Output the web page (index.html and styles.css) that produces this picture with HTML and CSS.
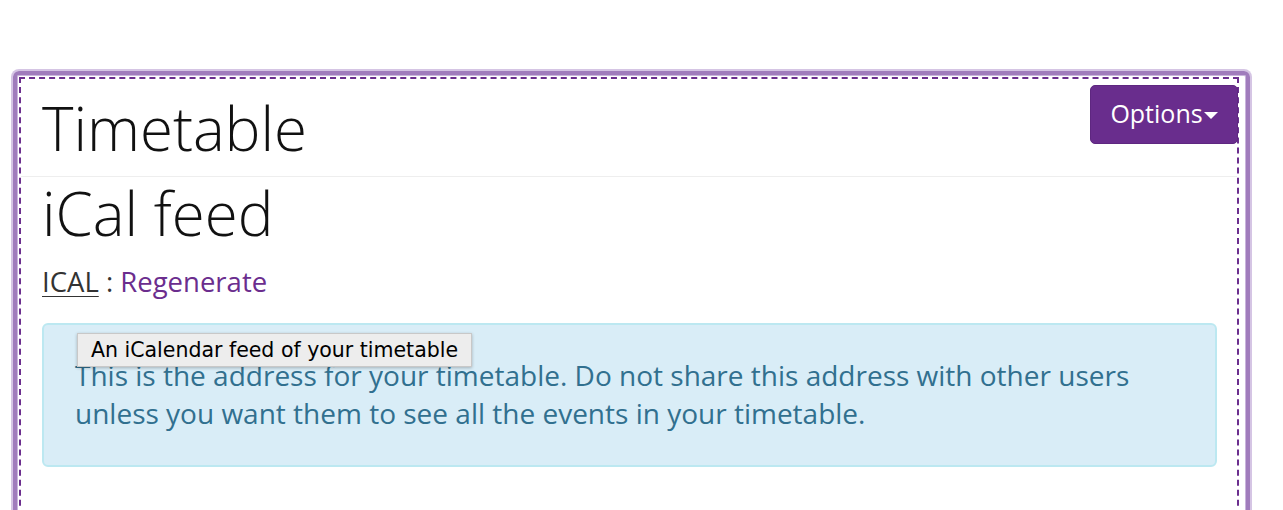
FILE: index.html
```html
<!DOCTYPE html>
<html>
<head>
<meta charset="utf-8">
<link rel="stylesheet" href="styles.css">
</head>
<body>
<div class="frame">
  <div class="inner">
    <div class="header">
      <h1 class="title">Timetable</h1>
      <button class="btn-options">Options<span class="caret"></span></button>
    </div>
    <div class="content">
      <h2 class="subtitle">iCal feed</h2>
      <p class="links"><abbr class="abbr">ICAL</abbr> : <a class="regen" href="#">Regenerate</a></p>
      <div class="alert">
        This is the address for your timetable. Do not share this address with other users unless you want them to see all the events in your timetable.
        <div class="tooltip">An iCalendar feed of your timetable</div>
      </div>
    </div>
  </div>
</div>
</body>
</html>
```
FILE: styles.css
```css
html, body {
  margin: 0;
  padding: 0;
  background: #fff;
  overflow: hidden;
  height: 510px;
}
body {
  font-family: "Open Sans", sans-serif;
  color: #333;
}
.frame {
  margin: 71px 33px 0 13px;
  border: 4px solid #a07cbc;
  border-radius: 6px;
  box-shadow: 0 0 0 2px #d5c5e4, inset 0 0 0 1px #c9b4dc;
  padding: 2px 7px 0 2px;
  height: 600px;
}
.inner {
  border: 2px dashed #6b2e8e;
  height: 100%;
  box-sizing: border-box;
}
.header {
  display: flex;
  justify-content: space-between;
  align-items: flex-start;
  border-bottom: 1px solid #eee;
  padding: 0 0 0 21px;
  height: 97px;
}
.title {
  margin: 11px 0 0 0;
  font-weight: 300;
  font-size: 60px;
  line-height: 76px;
  color: #111;
}
.btn-options {
  margin-top: 6px;
  margin-right: -1px;
  width: 148px;
  height: 59px;
  background: #692d8d;
  border: 1px solid #5e2780;
  border-radius: 5px;
  color: #fff;
  font-family: "Open Sans", sans-serif;
  font-size: 25px;
  padding: 0 0 4px 0;
  display: flex;
  align-items: center;
  justify-content: center;
  position: relative;
}
.caret {
  display: inline-block;
  width: 0;
  height: 0;
  border-left: 7px solid transparent;
  border-right: 7px solid transparent;
  border-top: 7px solid #fff;
  margin: 6px 0 0 1px;
}
.content {
  padding: 0 20px 0 21px;
}
.subtitle {
  margin: 0;
  font-weight: 300;
  font-size: 60px;
  line-height: 72px;
  color: #111;
}
.links {
  margin: 14px 0 0 0;
  font-size: 27.5px;
  line-height: 38px;
  color: #333;
}
.abbr {
  text-decoration: underline;
  text-underline-offset: 4px;
  text-decoration-thickness: 1px;
}
.regen {
  color: #6b2d8e;
  text-decoration: none;
}
.alert {
  position: relative;
  margin-top: 22px;
  background: #d9edf7;
  border: 2px solid #bce8f1;
  border-radius: 6px;
  color: #31708f;
  font-size: 28px;
  line-height: 38px;
  padding: 31px 31px 33px 31px;
}
.tooltip {
  position: absolute;
  left: 33px;
  top: 8px;
  background: #ededed;
  border: 1px solid #c8c8c8;
  box-shadow: 0 1px 3px rgba(0,0,0,0.25);
  color: #000;
  font-family: "DejaVu Sans", sans-serif;
  font-size: 20.5px;
  line-height: 24px;
  padding: 4px 13px 4px 13px;
  white-space: nowrap;
}
```
